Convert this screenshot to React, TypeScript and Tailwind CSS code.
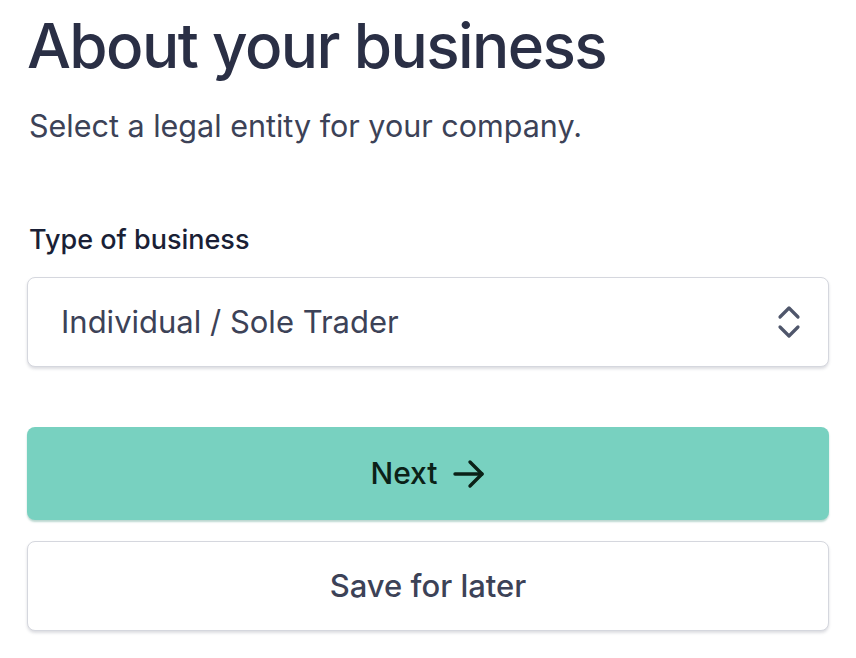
import React from "react";

export default function App() {
  return (
    <div className="min-h-screen bg-white px-[27px] pt-[10px]" style={{ fontFamily: "Inter, 'Noto Sans', sans-serif" }}>
      <h1 className="text-[62px] leading-[72px] font-medium text-[#2a2f45] tracking-[-1.6px]">About your business</h1>
      <p className="mt-[26px] text-[30.5px] leading-[36px] text-[#3c4257] pl-[2px]">Select a legal entity for your company.</p>
      <label className="mt-[79px] block text-[27px] leading-[34px] font-[500] text-[#1a1f36] pl-[2px]">Type of business</label>
      <div className="mt-[20px] flex h-[90px] items-center justify-between rounded-[8px] border border-[#d5d7de] bg-white pl-[33px] pr-[26px] shadow-[0_2px_3px_rgba(60,66,87,0.18)]">
        <span className="text-[31px] text-[#3c4257]">Individual / Sole Trader</span>
        <svg width="26" height="36" viewBox="0 0 26 36" fill="none" stroke="#4f566b" strokeWidth="3.2" strokeLinecap="round" strokeLinejoin="round">
          <path d="M4 13 L13 4 L22 13" />
          <path d="M4 23 L13 32 L22 23" />
        </svg>
      </div>
      <button className="mt-[60px] flex h-[93px] w-full items-center justify-center gap-[14px] rounded-[8px] bg-[#78d1c0] text-[30px] font-medium text-[#0b2117] shadow-[0_2px_2px_rgba(60,140,120,0.35)]">
        <span>Next</span>
        <svg width="34" height="30" viewBox="0 0 34 30" fill="none" stroke="#0b2117" strokeWidth="3.4" strokeLinecap="round" strokeLinejoin="round">
          <path d="M3 15 H30" />
          <path d="M18 3 L30 15 L18 27" />
        </svg>
      </button>
      <button className="mt-[21px] flex h-[90px] w-full items-center justify-center rounded-[8px] border border-[#d5d7de] bg-white text-[31px] font-medium text-[#3c4257] shadow-[0_2px_3px_rgba(60,66,87,0.18)]">
        Save for later
      </button>
    </div>
  );
}
